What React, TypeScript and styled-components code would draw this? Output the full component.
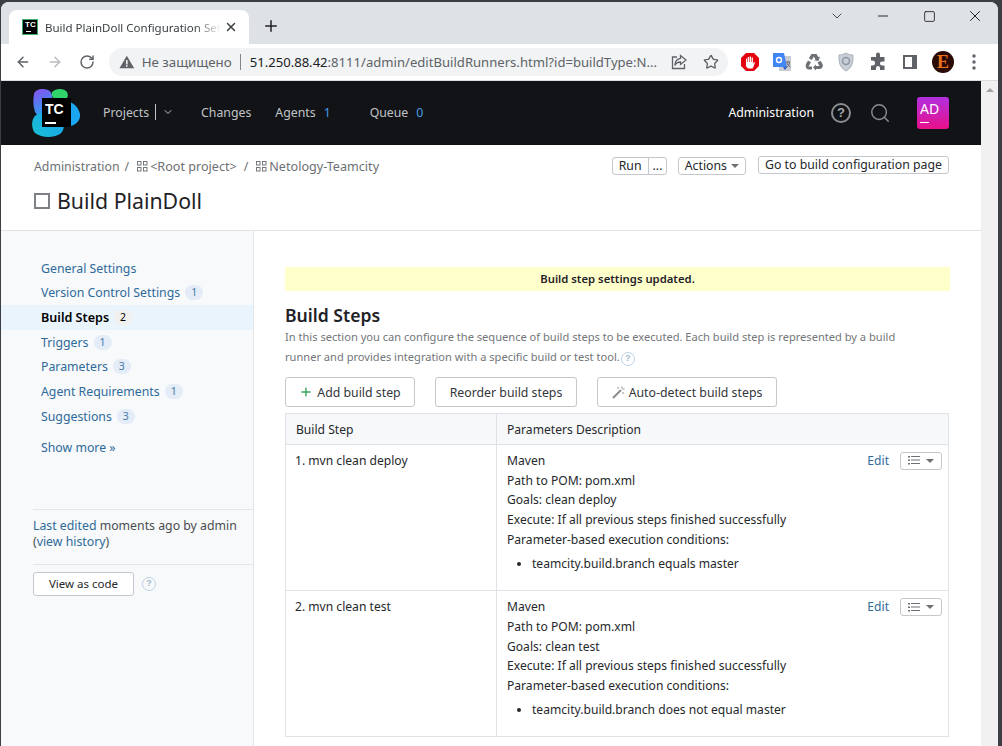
import React from "react";
import styled, { createGlobalStyle } from "styled-components";
import { ArrowLeft, ArrowRight, ChevronDown, Minus, Plus, RotateCw, Search, Square, Star, X } from "lucide-react";

const GlobalStyle = createGlobalStyle`
  html, body {
    margin: 0;
    padding: 0;
    background: #3b3e42;
    overflow: hidden;
  }
  * {
    box-sizing: border-box;
  }
`;

const UI_FONT = `"Noto Sans", "Open Sans", sans-serif`;
const LINK = "#2f6a9a";

const Frame = styled.div`
  width: 1002px;
  height: 746px;
  padding: 2px 4px 0 1px;
  overflow: hidden;
  font-family: ${UI_FONT};
  font-size: 12.3px;
  color: #25282b;
`;

const Window = styled.div`
  height: 744px;
  display: flex;
  flex-direction: column;
  background: #fff;
  border-radius: 8px 8px 0 0;
  overflow: hidden;
`;

const TabStrip = styled.div`
  height: 42px;
  flex: none;
  background: #dee1e6;
  display: flex;
  align-items: flex-end;
  padding-left: 8px;
`;

const Tab = styled.div`
  width: 240px;
  height: 34px;
  background: #fff;
  border-radius: 8px 8px 0 0;
  display: flex;
  align-items: center;
  padding-left: 13px;
`;

const Favicon = styled.div`
  width: 16px;
  height: 16px;
  background: #000;
  border: 1px solid #3fae6a;
  color: #fff;
  font: 700 8px/9px "Liberation Sans", sans-serif;
  padding-left: 2px;
  flex: none;
  position: relative;
  &::after {
    content: "";
    position: absolute;
    left: 3px;
    bottom: 2px;
    width: 5px;
    height: 1px;
    background: #fff;
  }
`;

const TabTitle = styled.div`
  margin-left: 7px;
  width: 176px;
  white-space: nowrap;
  font-size: 11.5px;
  color: #3c4043;
  -webkit-mask-image: linear-gradient(90deg, #000 150px, transparent 176px);
  mask-image: linear-gradient(90deg, #000 150px, transparent 176px);
`;

const TabClose = styled(X)`
  margin-left: 3px;
  color: #3c4043;
`;

const NewTab = styled(Plus)`
  margin: 0 0 9px 13px;
  color: #202124;
`;

const WindowControls = styled.div`
  margin-left: auto;
  align-self: flex-start;
  display: flex;
  height: 28px;
  color: #202124;
`;

const WindowControl = styled.span`
  width: 46px;
  display: flex;
  align-items: center;
  justify-content: center;
`;

const Toolbar = styled.div`
  height: 37px;
  flex: none;
  background: #fff;
  display: flex;
  align-items: center;
  padding: 0 0 1px 14px;
  border-bottom: 1px solid #dadce0;
`;

const NavIcons = styled.div<{ $gap: number }>`
  display: flex;
  align-items: center;
  gap: ${(p) => p.$gap}px;
  color: #5f6368;
`;

const Omnibox = styled.div`
  width: 619px;
  height: 28px;
  margin-left: 14px;
  background: #f1f3f4;
  border-radius: 14px;
  display: flex;
  align-items: center;
  padding: 0 9px 0 10px;
`;

const InsecureLabel = styled.span`
  margin-left: 7px;
  font-size: 13.3px;
  color: #5f6368;
  white-space: nowrap;
`;

const UrlDivider = styled.span`
  width: 1px;
  height: 16px;
  background: #80868b;
  margin: 0 9px 0 8px;
`;

const Url = styled.span`
  width: 408px;
  font-size: 13.1px;
  color: #5f6368;
  white-space: nowrap;
  b {
    font-weight: 400;
    color: #202124;
  }
`;

const OmniActions = styled.div`
  margin-left: 14px;
  display: flex;
  align-items: center;
  gap: 16px;
  color: #5f6368;
`;

const Extensions = styled.div`
  margin-left: 12px;
  display: flex;
  align-items: center;
  gap: 12px;
`;

const ProfileE = styled.div`
  width: 22px;
  height: 22px;
  border-radius: 50%;
  background: #2a0a04;
  color: #e9711c;
  font: 700 18px/22px "Liberation Serif", serif;
  text-align: center;
`;

const Viewport = styled.div`
  flex: 1;
  min-height: 0;
  display: flex;
`;

const Page = styled.div`
  width: 980px;
  display: flex;
  flex-direction: column;
  overflow: hidden;
`;

const Scrollbar = styled.div`
  width: 17px;
  background: #f1f1f1;
  display: flex;
  justify-content: center;
  padding-top: 7px;
  &::before {
    content: "";
    width: 0;
    height: 0;
    border-left: 4px solid transparent;
    border-right: 4px solid transparent;
    border-bottom: 4px solid #a3a3a3;
  }
`;

const TopNav = styled.nav`
  height: 64px;
  flex: none;
  background: #121316;
  display: flex;
  align-items: center;
  padding: 0 32px 0 31px;
  color: #c0c3c6;
`;

const LogoBox = styled.div`
  width: 48px;
  height: 50px;
  position: relative;
  flex: none;
  margin-right: 23px;
`;

const LogoMark = styled.div`
  position: absolute;
  left: 10px;
  top: 10px;
  width: 29px;
  height: 29px;
  background: #000;
  color: #fff;
  font: 700 14px/16px "Liberation Sans", sans-serif;
  padding: 3px 0 0 3px;
  &::after {
    content: "";
    position: absolute;
    left: 3px;
    bottom: 3px;
    width: 11px;
    height: 2px;
    background: #fff;
  }
`;

const ProjectsGroup = styled.div`
  display: flex;
  align-items: center;
  margin-bottom: 2px;
`;

const NavDivider = styled.span`
  width: 1px;
  height: 16px;
  background: #c0c3c6;
  margin: 0 6px 0 6px;
`;

const NavItem = styled.span<{ $gap: number }>`
  margin: 0 0 2px ${(p) => p.$gap}px;
  white-space: nowrap;
  display: flex;
  gap: 8px;
`;

const NavCount = styled.span`
  color: #4a9be8;
  width: 10px;
`;

const NavRight = styled.div`
  margin-left: auto;
  display: flex;
  align-items: center;
`;

const AdminLink = styled.span`
  color: #fff;
  margin: 0 17px 2px 0;
`;

const HelpRound = styled.span`
  width: 20px;
  height: 20px;
  border: 2px solid #8a8d90;
  border-radius: 50%;
  color: #a5a8ab;
  font: 700 13px/16px "Liberation Sans", sans-serif;
  text-align: center;
  margin-right: 18px;
`;

const SearchIcon = styled(Search)`
  color: #8a8d90;
  margin-right: 26px;
`;

const Avatar = styled.div`
  width: 32px;
  height: 32px;
  border-radius: 3px;
  background: linear-gradient(180deg, #b230e0, #e8108a);
  color: #fff;
  font-size: 14px;
  line-height: 18px;
  padding: 3px 0 0 3px;
  position: relative;
  &::after {
    content: "";
    position: absolute;
    left: 3px;
    bottom: 6px;
    width: 9px;
    height: 1px;
    background: #fff;
  }
`;

const PageHeader = styled.header`
  height: 86px;
  flex: none;
  border-bottom: 1px solid #dfe3e8;
  padding: 11px 32px 0 33px;
`;

const CrumbRow = styled.div`
  display: flex;
  align-items: center;
  height: 20px;
  color: #6d7175;
`;

const CrumbSep = styled.span`
  margin: 0 8px 0 5px;
`;

const CrumbName = styled.span`
  font-size: 12.6px;
  margin-right: 2px;
`;

const ProjectIcon = styled.svg`
  margin-right: 2px;
  color: #75797d;
`;

const HeaderActions = styled.div`
  margin-left: auto;
  display: flex;
  align-items: flex-start;
  align-self: flex-start;
  gap: 11px;
  color: #25282b;
`;

const SmallButton = styled.div<{ $lift?: boolean }>`
  height: 18px;
  margin: ${(p) => (p.$lift ? "0 0 0 1px" : "1px 0 0")};
  padding: 0 6px;
  border: 1px solid #c4c8cc;
  border-radius: 3px;
  background: #fff;
  line-height: 16px;
  display: flex;
  align-items: center;
  white-space: nowrap;
  gap: 4px;
`;

const RunSplit = styled.div`
  display: flex;
  width: 55px;
  height: 18px;
  margin-top: 1px;
  border: 1px solid #c4c8cc;
  border-radius: 3px;
  line-height: 16px;
  span {
    padding: 0 6px;
  }
  span + span {
    border-left: 1px solid #c4c8cc;
    padding: 0 4px;
  }
`;

const Caret = styled.i`
  display: inline-block;
  width: 0;
  height: 0;
  border-left: 4px solid transparent;
  border-right: 4px solid transparent;
  border-top: 4px solid #6d7175;
`;

const TitleRow = styled.div`
  display: flex;
  align-items: center;
  margin-top: 9px;
`;

const TitleCheck = styled.span`
  width: 16px;
  height: 16px;
  border: 2px solid #7d8185;
  margin-right: 7px;
`;

const PageTitle = styled.h1`
  margin: 0;
  font-size: 21.3px;
  line-height: 32px;
  font-weight: 400;
  color: #1f2226;
`;

const Body = styled.div`
  flex: 1;
  min-height: 0;
  display: flex;
`;

const Sidebar = styled.aside`
  width: 253px;
  flex: none;
  background: #f7f9fb;
  border-right: 1px solid #e2e5e9;
  padding-top: 24.8px;
`;

const SideItem = styled.div<{ $active?: boolean }>`
  height: 24.7px;
  padding-left: 40px;
  display: flex;
  align-items: center;
  gap: 5px;
  color: ${(p) => (p.$active ? "#000" : LINK)};
  font-size: ${(p) => (p.$active ? 12.6 : 12.3)}px;
  font-weight: ${(p) => (p.$active ? 600 : 400)};
  background: ${(p) => (p.$active ? "#eaf4fc" : "transparent")};
  white-space: nowrap;
`;

const Badge = styled.span<{ $active?: boolean }>`
  min-width: 18px;
  height: 15px;
  border-radius: 8px;
  background: ${(p) => (p.$active ? "#f1f0ee" : "#e3ecf7")};
  color: ${(p) => (p.$active ? "#000" : "#4a7aaa")};
  font-size: 10.5px;
  font-weight: 400;
  line-height: 15px;
  text-align: center;
`;

const ShowMore = styled.div`
  margin: 10.5px 0 0 40px;
  color: ${LINK};
`;

const EditInfo = styled.div`
  margin: 52.7px 0 0 32px;
  padding: 8px 0 14px;
  border-top: 1px solid #e2e5e9;
  border-bottom: 1px solid #e2e5e9;
  line-height: 16px;
  color: #4a4d50;
  a {
    color: ${LINK};
  }
`;

const CodeRow = styled.div`
  margin: 7px 0 0 32px;
  display: flex;
  align-items: center;
`;

const CodeButton = styled.div`
  width: 101px;
  height: 24px;
  border: 1px solid #c4c8cc;
  border-radius: 3px;
  background: #fff;
  font-size: 11.5px;
  line-height: 22px;
  text-align: center;
`;

const HelpHint = styled.span<{ $left: number }>`
  display: inline-block;
  width: 14px;
  height: 14px;
  margin-left: ${(p) => p.$left}px;
  border: 1.5px solid #bdd2e4;
  border-radius: 50%;
  color: #9fb9cf;
  font: 700 9px/11px "Liberation Sans", sans-serif;
  text-align: center;
  vertical-align: 0;
`;

const Main = styled.main`
  flex: 1;
  min-width: 0;
  padding: 36px 31px 0 31px;
`;

const Banner = styled.div`
  height: 24px;
  background: #ffffcc;
  text-align: center;
  font-size: 11.3px;
  font-weight: 600;
  line-height: 23px;
  color: #1f2226;
`;

const SectionTitle = styled.h2`
  margin: 12px 0 0;
  font-size: 17.6px;
  line-height: 24px;
  font-weight: 600;
  color: #1f2226;
`;

const Description = styled.p`
  margin: 0;
  width: 620px;
  height: 41px;
  font-size: 11.1px;
  line-height: 20px;
  color: #737679;
`;

const ButtonRow = styled.div`
  display: flex;
  gap: 20px;
  margin-top: 9px;
`;

const ActionButton = styled.div<{ $width: number }>`
  width: ${(p) => p.$width}px;
  height: 30px;
  border: 1px solid #c4c8cc;
  border-radius: 3px;
  background: #fff;
  display: flex;
  align-items: center;
  justify-content: center;
  gap: 4px;
  color: #33363a;
`;

const StepsTable = styled.table`
  margin-top: 6px;
  width: 664px;
  border-collapse: collapse;
  table-layout: fixed;
  font-size: 12.1px;
  td, th {
    border: 1px solid #dfe3e8;
    text-align: left;
    vertical-align: top;
    font-weight: 400;
  }
`;

const HeadCell = styled.th`
  height: 31px;
  background: #f7f8fa;
  padding: 0 10px;
  vertical-align: middle !important;
`;

const NameCell = styled.td`
  padding: 6px 9px;
  line-height: 19.7px;
`;

const ParamsCell = styled.td`
  padding: 6px 6px 0 10px;
  position: relative;
  line-height: 19.7px;
`;

const RowTools = styled.div`
  position: absolute;
  top: 6px;
  right: 6px;
  display: flex;
  align-items: center;
  gap: 11px;
  color: ${LINK};
`;

const ListButton = styled.div`
  width: 42px;
  height: 18px;
  border: 1px solid #c4c8cc;
  border-radius: 3px;
  display: flex;
  align-items: center;
  justify-content: center;
  gap: 6px;
`;

const Conditions = styled.ul`
  margin: 4px 0 17px;
  padding-left: 25px;
`;

function ProjectGlyph() {
  return (
    <ProjectIcon width="11" height="11" viewBox="0 0 11 11" fill="none" stroke="currentColor">
      <rect x="0.5" y="0.5" width="3.5" height="3.5" />
      <rect x="6.5" y="0.5" width="3.5" height="3.5" />
      <rect x="0.5" y="6.5" width="3.5" height="3.5" />
      <rect x="6.5" y="6.5" width="3.5" height="3.5" />
    </ProjectIcon>
  );
}

function TeamCityLogo() {
  return (
    <LogoBox>
      <svg width="48" height="50" viewBox="0 0 48 50">
        <defs>
          <linearGradient id="tcPurple" x1="0" y1="0" x2="0.3" y2="1">
            <stop offset="0" stop-color="#8a50f0" />
            <stop offset="1" stop-color="#2a9df0" />
          </linearGradient>
          <linearGradient id="tcBlue" x1="0" y1="1" x2="1" y2="0.3">
            <stop offset="0" stop-color="#19c0d0" />
            <stop offset="1" stop-color="#1aa3f0" />
          </linearGradient>
        </defs>
        <path d="M2 6C3 1 11 0 16 2c5 2 6 10 2 22-2 6-12 6-15 0C1 18 1 12 2 6z" fill="url(#tcPurple)" />
        <path d="M20 4c4-4 12-4 15 0 2 4 0 8-4 9-5 1-13-3-11-9z" fill="#2fd36a" />
        <path d="M33 13c6-1 14 6 15 13 1 7-6 13-13 12-9-1-11-6-10-13 0-5 3-11 8-12z" fill="#1aa7f0" />
        <path d="M4 27c6-4 17-3 23 2 5 5 7 12 1 17-7 4-18 4-25-1-4-5-4-14 1-18z" fill="url(#tcBlue)" />
      </svg>
      <LogoMark>TC</LogoMark>
    </LogoBox>
  );
}

const sideItems = [
  { label: "General Settings" },
  { label: "Version Control Settings", count: 1 },
  { label: "Build Steps", count: 2, active: true },
  { label: "Triggers", count: 1 },
  { label: "Parameters", count: 3 },
  { label: "Agent Requirements", count: 1 },
  { label: "Suggestions", count: 3 },
];

const steps = [
  { name: "1. mvn clean deploy", goals: "clean deploy", condition: "teamcity.build.branch equals master" },
  { name: "2. mvn clean test", goals: "clean test", condition: "teamcity.build.branch does not equal master" },
];

export default function App() {
  return (
    <Frame>
      <GlobalStyle />
      <Window>
        <TabStrip>
          <Tab>
            <Favicon>TC</Favicon>
            <TabTitle>Build PlainDoll Configuration Sett</TabTitle>
            <TabClose size={14} strokeWidth={2.5} />
          </Tab>
          <NewTab size={18} strokeWidth={2} />
          <WindowControls>
            <WindowControl><ChevronDown size={16} strokeWidth={1.2} /></WindowControl>
            <WindowControl><Minus size={16} strokeWidth={1.4} /></WindowControl>
            <WindowControl><Square size={13} strokeWidth={1.6} /></WindowControl>
            <WindowControl><X size={18} strokeWidth={1.3} /></WindowControl>
          </WindowControls>
        </TabStrip>

        <Toolbar>
          <NavIcons $gap={16}>
            <ArrowLeft size={16} strokeWidth={2.2} />
            <ArrowRight size={16} strokeWidth={2.2} color="#b8bbbf" />
            <RotateCw size={16} strokeWidth={2.2} />
          </NavIcons>
          <Omnibox>
            <svg width="16" height="14" viewBox="0 0 16 14">
              <path d="M8 0.5 15.5 13.5H0.5z" fill="#5f6368" />
              <rect x="7.2" y="5" width="1.6" height="4.5" fill="#f1f3f4" />
              <rect x="7.2" y="10.3" width="1.6" height="1.6" fill="#f1f3f4" />
            </svg>
            <InsecureLabel>Не защищено</InsecureLabel>
            <UrlDivider />
            <Url><b>51.250.88.42</b>:8111/admin/editBuildRunners.html?id=buildType:N...</Url>
            <OmniActions>
              <svg width="16" height="16" viewBox="0 0 16 16" fill="none" stroke="#5f6368" strokeWidth="1.3">
                <path d="M6 3H1.5v11.5h12V10" />
                <path d="M9.5 1.5 15 6l-5.5 4.5V8C7 8 5 9 3.8 11.5 4 7.5 6 4.8 9.5 4.3z" />
              </svg>
              <Star size={16} strokeWidth={2} />
            </OmniActions>
          </Omnibox>
          <Extensions>
            <svg width="20" height="20" viewBox="0 0 20 20">
              <path d="M6 1h8l5 5v8l-5 5H6l-5-5V6z" fill="#e3000f" />
              <path d="M6 10V6.500h1.200V10h.6V5h1.300v5h.6V4.500h1.300V10h.6V5.500h1.300V12l1-2 1.100.5-1.600 4.500c-.4 1-1 1.500-2.100 1.500H9c-1.500 0-3-1.500-3-3z" fill="#fff" />
            </svg>
            <svg width="20" height="20" viewBox="0 0 20 20">
              <rect x="7" y="4" width="12" height="15" fill="#c9ccd0" />
              <path d="M1 1h11l3 14H1z" fill="#4285f4" />
              <path d="M11 15h4l-2 3z" fill="#2a56c6" />
              <circle cx="7" cy="8" r="2.500" fill="none" stroke="#fff" strokeWidth="1.400" />
              <path d="M14 10h4M16 9v1M14.500 15c2 0 3-3 3-5M15 11c.5 2 2 3 3.500 4" fill="none" stroke="#5f6368" />
            </svg>
            <svg width="20" height="20" viewBox="0 0 20 20" fill="#6d7175">
              <path d="M7.500 2h5l2 3.300 1.500-.8-1.500 4.500-4.500-.8 1.500-.8L9.800 4.500 7.800 8 4.800 6.300z" />
              <path d="M2 12l2-3.500 3 1.800-2.500 4.200H8v3H4.500C2.500 17.500 1 14.500 2 12z" />
              <path d="M18.500 12l-2-3.300-3 1.800 2 3.500H12v-1.500L9 15.500l3 3V17h4c2 0 3.500-3 2.500-5z" />
            </svg>
            <svg width="20" height="20" viewBox="0 0 20 20">
              <path d="M10 1c2.500 1.500 5 2 7 2 0 7 0 12-7 16C3 15 3 10 3 3c2 0 4.500-.5 7-2z" fill="#c9ced6" stroke="#aab1bb" />
              <circle cx="10" cy="9" r="3.500" fill="none" stroke="#8e96a3" strokeWidth="1.500" />
            </svg>
            <svg width="20" height="20" viewBox="0 0 20 20">
              <path d="M8 2.500a2 2 0 0 1 4 0V5h4.500v4.500H14a2 2 0 0 0 0 4h2.500V18H12v-2a2 2 0 0 0-4 0v2H3v-4.500h1.500a2.500 2.500 0 0 0 0-5H3V5h5z" fill="#5f6368" />
            </svg>
            <svg width="20" height="20" viewBox="0 0 20 20">
              <path d="M3 3h14v14H3z" fill="#5f6368" />
              <path d="M5 5h7v10H5z" fill="#fff" />
            </svg>
            <ProfileE>E</ProfileE>
            <svg width="16" height="20" viewBox="0 0 16 20" fill="#5f6368">
              <circle cx="8" cy="4" r="1.700" />
              <circle cx="8" cy="10" r="1.700" />
              <circle cx="8" cy="16" r="1.700" />
            </svg>
          </Extensions>
        </Toolbar>

        <Viewport>
          <Page>
            <TopNav>
              <TeamCityLogo />
              <ProjectsGroup>
                Projects
                <NavDivider />
                <ChevronDown size={12} strokeWidth={2} />
              </ProjectsGroup>
              <NavItem $gap={27}>Changes</NavItem>
              <NavItem $gap={24}>
                Agents <NavCount>1</NavCount>
              </NavItem>
              <NavItem $gap={36}>
                Queue <NavCount>0</NavCount>
              </NavItem>
              <NavRight>
                <AdminLink>Administration</AdminLink>
                <HelpRound>?</HelpRound>
                <SearchIcon size={22} strokeWidth={1.6} />
                <Avatar>AD</Avatar>
              </NavRight>
            </TopNav>

            <PageHeader>
              <CrumbRow>
                Administration
                <CrumbSep>/</CrumbSep>
                <ProjectGlyph />
                <CrumbName>&lt;Root project&gt;</CrumbName>
                <CrumbSep>/</CrumbSep>
                <ProjectGlyph />
                <CrumbName>Netology-Teamcity</CrumbName>
                <HeaderActions>
                  <RunSplit>
                    <span>Run</span>
                    <span>...</span>
                  </RunSplit>
                  <SmallButton>
                    Actions <Caret />
                  </SmallButton>
                  <SmallButton $lift>Go to build configuration page</SmallButton>
                </HeaderActions>
              </CrumbRow>
              <TitleRow>
                <TitleCheck />
                <PageTitle>Build PlainDoll</PageTitle>
              </TitleRow>
            </PageHeader>

            <Body>
              <Sidebar>
                {sideItems.map((item) => (
                  <SideItem key={item.label} $active={item.active}>
                    {item.label}
                    {item.count && <Badge $active={item.active}>{item.count}</Badge>}
                  </SideItem>
                ))}
                <ShowMore>Show more »</ShowMore>
                <EditInfo>
                  <a>Last edited</a> moments ago by admin
                  <br />
                  (<a>view history</a>)
                </EditInfo>
                <CodeRow>
                  <CodeButton>View as code</CodeButton>
                  <HelpHint $left={8}>?</HelpHint>
                </CodeRow>
              </Sidebar>

              <Main>
                <Banner>Build step settings updated.</Banner>
                <SectionTitle>Build Steps</SectionTitle>
                <Description>
                  In this section you can configure the sequence of build steps to be executed. Each build step is represented by a build
                  runner and provides integration with a specific build or test tool.
                  <HelpHint $left={1}>?</HelpHint>
                </Description>
                <ButtonRow>
                  <ActionButton $width={130}>
                    <Plus size={14} strokeWidth={2.4} color="#3aa55b" />
                    Add build step
                  </ActionButton>
                  <ActionButton $width={142}>Reorder build steps</ActionButton>
                  <ActionButton $width={180}>
                    <svg width="13" height="13" viewBox="0 0 13 13" fill="none" stroke="#8a8d90">
                      <path d="M1 12 9 4" strokeWidth="2" />
                      <path d="M10 0.500v2M12.500 3h-2M11 6v2M6 1v2" strokeWidth="1" />
                    </svg>
                    Auto-detect build steps
                  </ActionButton>
                </ButtonRow>
                <StepsTable>
                  <colgroup>
                    <col style={{ width: 211 }} />
                    <col />
                  </colgroup>
                  <thead>
                    <tr>
                      <HeadCell>Build Step</HeadCell>
                      <HeadCell>Parameters Description</HeadCell>
                    </tr>
                  </thead>
                  <tbody>
                    {steps.map((step) => (
                      <tr key={step.name}>
                        <NameCell>{step.name}</NameCell>
                        <ParamsCell>
                          <RowTools>
                            Edit
                            <ListButton>
                              <svg width="12" height="9" viewBox="0 0 12 9" fill="#6d7175">
                                <rect x="0" y="0" width="2" height="1.500" />
                                <rect x="3" y="0" width="9" height="1" />
                                <rect x="0" y="3.500" width="2" height="1.500" />
                                <rect x="3" y="3.500" width="9" height="1" />
                                <rect x="0" y="7" width="2" height="1.500" />
                                <rect x="3" y="7" width="9" height="1" />
                              </svg>
                              <Caret />
                            </ListButton>
                          </RowTools>
                          Maven
                          <br />
                          Path to POM: pom.xml
                          <br />
                          Goals: {step.goals}
                          <br />
                          Execute: If all previous steps finished successfully
                          <br />
                          Parameter-based execution conditions:
                          <Conditions>
                            <li>{step.condition}</li>
                          </Conditions>
                        </ParamsCell>
                      </tr>
                    ))}
                  </tbody>
                </StepsTable>
              </Main>
            </Body>
          </Page>
          <Scrollbar />
        </Viewport>
      </Window>
    </Frame>
  );
}
